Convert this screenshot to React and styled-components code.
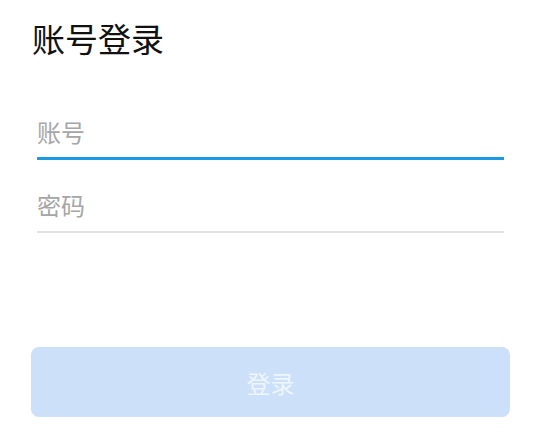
import React, { useState } from "react";
import styled, { createGlobalStyle } from "styled-components";

const Global = createGlobalStyle`
  html, body {
    margin: 0;
    padding: 0;
    background: #fff;
  }
  body {
    font-family: "Noto Sans CJK SC", "Noto Sans", sans-serif;
  }
`;

const Page = styled.div`
  padding: 15px 27px 0 31px;
`;

const Title = styled.h1`
  margin: 0 0 0 1px;
  font-size: 33px;
  font-weight: 400;
  line-height: 46px;
  color: #111;
`;

const Form = styled.div`
  margin-top: 39px;
  display: flex;
  flex-direction: column;
  gap: 13px;
  padding: 0 6px;
`;

const Field = styled.input`
  display: block;
  width: 100%;
  box-sizing: border-box;
  height: 60px;
  border: none;
  border-bottom: ${(p) => (p.$active ? "3px solid #1a9ae4" : "2px solid #e2e2e2")};
  outline: none;
  padding: 5px 0 0;
  font-family: inherit;
  font-size: 24px;
  color: #222;
  caret-color: #1a9ae4;
  background: transparent;
  &::placeholder {
    color: #a6a6a6;
  }
`;

const Submit = styled.button`
  display: block;
  width: 100%;
  height: 70px;
  margin-top: 114px;
  border: none;
  border-radius: 8px;
  background: #cce0f9;
  color: rgba(255, 255, 255, 0.7);
  font-family: inherit;
  font-size: 24px;
`;

export default function App() {
  const [user, setUser] = useState("");
  const [pwd, setPwd] = useState("");
  const ready = user && pwd;

  return (
    <>
      <Global />
      <Page>
        <Title>账号登录</Title>
        <Form>
          <Field
            $active
            autoFocus
            placeholder="账号"
            value={user}
            onChange={(e) => setUser(e.target.value)}
          />
          <Field
            type="password"
            placeholder="密码"
            value={pwd}
            onChange={(e) => setPwd(e.target.value)}
          />
        </Form>
        <Submit disabled={!ready}>登录</Submit>
      </Page>
    </>
  );
}
